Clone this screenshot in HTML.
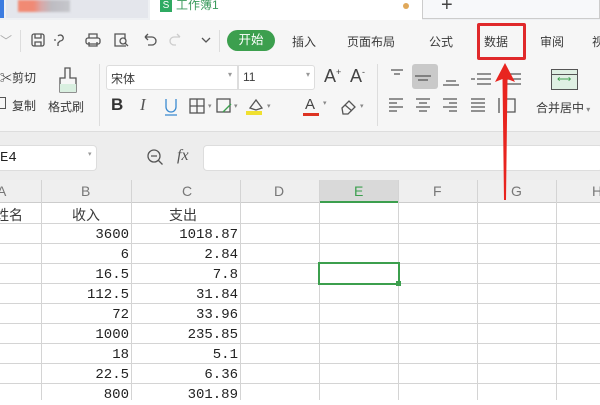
<!DOCTYPE html>
<html><head><meta charset="utf-8"><style>
*{margin:0;padding:0;box-sizing:border-box}
body{width:600px;height:400px;overflow:hidden;background:#fff;font-family:"Liberation Sans","Noto Sans CJK SC",sans-serif;position:relative;color:#3a3a3a}
.a{position:absolute}
.t{font-size:12px;white-space:nowrap}
.m{font-family:"Liberation Mono","Noto Sans CJK SC",monospace;font-size:14px;color:#222}
.ic{position:absolute;stroke:#555;fill:none;stroke-width:1.3}
</style></head><body>
<div class="a" style="left:0;top:0;width:600px;height:20px;background:#eef0f3"></div>
<div class="a" style="left:0;top:0;width:4px;height:18px;background:#3b7be0"></div>
<div class="a" style="left:6px;top:0;width:142px;height:18px;background:#e4e6ec"></div>
<div class="a" style="left:18px;top:0;width:52px;height:12px;background:linear-gradient(90deg,#f28a72 0,#f08a75 30%,#d9a8a8 45%,#bdbcc2 65%,#c6c7cc 100%);filter:blur(1px)"></div>
<div class="a" style="left:150px;top:0;width:272px;height:20px;background:#fff"></div>
<div class="a" style="left:160px;top:0;width:12px;height:12px;background:#2faa62;color:#fff;font-size:10px;text-align:center;line-height:12px">S</div>
<div class="a t" style="left:176px;top:-4px;color:#3a9a5c">工作簿1</div>
<div class="a" style="left:403px;top:3px;width:6px;height:6px;border-radius:50%;background:#e0a85a"></div>
<div class="a" style="left:422px;top:0;width:178px;height:19px;background:#f7f8fa;border:1px solid #ccc;border-top:none"></div>
<div class="a" style="left:441px;top:-6px;font-size:20px;color:#444">+</div>
<div class="a" style="left:0;top:20px;width:600px;height:42px;background:#f6f6f6"></div>
<div class="a t" style="left:0;top:32px;color:#aaa">﹀</div>
<div class="a" style="left:20px;top:30px;width:1px;height:22px;background:#ddd"></div>
<svg class="ic" style="left:30px;top:32px" width="110" height="16">
<rect x="2" y="2" width="12" height="12" rx="2"/><path d="M5 2v4h6V2M5 14v-4h6v4"/>
<path d="M28 4a3 3 0 1 1 2 5l-2 2v3M26 8h-2"/>
<rect x="56" y="6" width="14" height="6" rx="2"/><path d="M59 6V2h8v4M59 10v4h8v-4"/>
<path d="M96 14H85V2h10v5"/><circle cx="93" cy="9" r="3"/><path d="M95 11l3 3"/>
</svg>
<svg class="ic" style="left:142px;top:32px" width="80" height="16">
<path d="M3 5h7a4 4 0 0 1 0 8H6M3 5l3-3M3 5l3 3"/>
<path d="M38 5h-6a4 4 0 0 0 0 8h2M38 5l-3-3" stroke="#ccc"/>
<path d="M60 6l4 4 4-4" />
</svg>
<div class="a" style="left:219px;top:30px;width:1px;height:22px;background:#ddd"></div>
<div class="a" style="left:227px;top:30px;width:48px;height:21px;border-radius:11px;background:#3c9f4e;color:#fff;font-size:12.5px;text-align:center;line-height:21px">开始</div>
<div class="a t" style="left:292px;top:33px">插入</div>
<div class="a t" style="left:347px;top:33px">页面布局</div>
<div class="a t" style="left:429px;top:33px">公式</div>
<div class="a t" style="left:484px;top:33px">数据</div>
<div class="a t" style="left:540px;top:33px">审阅</div>
<div class="a t" style="left:592px;top:33px">视</div>
<div class="a" style="left:477px;top:23px;width:49px;height:37px;border:3px solid #e0292b;border-radius:2px"></div>
<div class="a" style="left:0;top:62px;width:600px;height:70px;background:#f6f6f6"></div>
<div class="a t" style="left:0;top:69px">✂</div>
<div class="a t" style="left:12px;top:69px">剪切</div>
<div class="a" style="left:0;top:97px;width:6px;height:12px;border:1px solid #555;border-left:none"></div>
<div class="a t" style="left:12px;top:97px">复制</div>
<svg class="ic" style="left:55px;top:66px" width="26" height="30"><path d="M10 2h5v10h6v14H5V12h5z"/><rect x="5" y="18" width="16" height="8" fill="#d9efe0" stroke="none"/></svg>
<div class="a t" style="left:48px;top:98px">格式刷</div>
<div class="a" style="left:99px;top:64px;width:1px;height:62px;background:#ddd"></div>
<div class="a" style="left:106px;top:65px;width:132px;height:25px;background:#fff;border:1px solid #ddd;border-radius:3px 0 0 3px"></div>
<div class="a t" style="left:111px;top:70px">宋体</div>
<div class="a t" style="left:228px;top:70px;font-size:8px;color:#999">▾</div>
<div class="a" style="left:238px;top:65px;width:77px;height:25px;background:#fff;border:1px solid #ddd;border-radius:0 3px 3px 0"></div>
<div class="a t" style="left:243px;top:70px">11</div>
<div class="a t" style="left:306px;top:70px;font-size:8px;color:#999">▾</div>
<div class="a" style="left:324px;top:66px;font-size:18px;color:#444">A<sup style="font-size:9px">+</sup></div>
<div class="a" style="left:350px;top:66px;font-size:18px;color:#444">A<sup style="font-size:9px">-</sup></div>
<div class="a" style="left:111px;top:95px;font-size:17px;font-weight:bold;color:#333">B</div>
<div class="a" style="left:140px;top:95px;font-size:17px;font-style:italic;color:#555;font-family:'Liberation Serif',serif">I</div>
<svg class="ic" style="left:160px;top:96px" width="160" height="22">
<path d="M6 3v8a5 5 0 0 0 10 0V3M5 19h12" stroke="#3a8ad0"/>
<rect x="30" y="3" width="14" height="14"/><path d="M30 10h14M37 3v14"/>
<text x="48" y="12" font-size="7" fill="#888" stroke="none">▾</text>
<rect x="57" y="3" width="13" height="13"/><path d="M63 16l8-8" stroke="#3c9f4e"/>
<text x="74" y="12" font-size="7" fill="#888" stroke="none">▾</text>
<path d="M90 12l6-8 6 8-6 2z"/><rect x="86" y="15" width="16" height="4" fill="#f0e030" stroke="none"/>
<text x="107" y="12" font-size="7" fill="#888" stroke="none">▾</text>
</svg>
<div class="a" style="left:303px;top:113px;width:16px;height:3px;background:#d32"></div>
<div class="a" style="left:305px;top:96px;font-size:15px;color:#444">A</div>
<div class="a t" style="left:323px;top:99px;font-size:7px;color:#888">▾</div>
<svg class="ic" style="left:338px;top:96px" width="30" height="20"><path d="M4 12l7-7 6 6-7 7H5z M7 9l7 6"/><text x="22" y="12" font-size="7" fill="#888" stroke="none">▾</text></svg>
<div class="a" style="left:377px;top:64px;width:1px;height:62px;background:#ddd"></div>
<div class="a" style="left:412px;top:64px;width:26px;height:25px;background:#c9c9c9;border-radius:3px"></div>
<svg class="ic" style="left:385px;top:66px" width="150" height="54" stroke-width="1.1">
<path d="M6 4h12M9 8h6"/>
<path d="M30 10h16M33 14h10"/>
<path d="M61 15h10M58 19h16"/>
<path d="M92 8h14M92 13h14M92 18h14M86 13h4" />
<path d="M122 8h14M122 13h14M122 18h14"/>
<path d="M4 33h14M4 37h8M4 41h14M4 45h8"/>
<path d="M31 33h14M34 37h8M31 41h14M34 45h8"/>
<path d="M58 33h14M64 37h8M58 41h14M64 45h8"/>
<path d="M86 33h14M86 37h14M86 41h14M86 45h14"/>
<path d="M114 32v15M118 33h12v13h-12"/>
</svg>
<div class="a" style="left:551px;top:69px;width:27px;height:21px;background:#dff0e3;border:1px solid #555"></div>
<div class="a" style="left:551px;top:74px;width:27px;height:1px;background:#555"></div>
<div class="a t" style="left:557px;top:74px;font-size:10px;color:#3c9f4e">⟷</div>
<div class="a t" style="left:536px;top:99px">合并居中<span style="font-size:8px;color:#888"> ▾</span></div>
<div class="a" style="left:0;top:132px;width:600px;height:48px;background:#ededed"></div>
<div class="a" style="left:0;top:131px;width:600px;height:1px;background:#ddd"></div>
<div class="a" style="left:0;top:145px;width:97px;height:26px;background:#fff;border:1px solid #ddd;border-left:none;border-radius:0 4px 4px 0"></div>
<div class="a m" style="left:0;top:150px">E4</div>
<div class="a t" style="left:88px;top:150px;font-size:7px;color:#999">▾</div>
<svg class="ic" style="left:146px;top:148px" width="20" height="20"><circle cx="8" cy="8" r="6"/><path d="M5 8h6M12.5 12.5l4 4"/></svg>
<div class="a" style="left:177px;top:147px;font-size:16px;font-style:italic;color:#555;font-family:'Liberation Serif',serif">fx</div>
<div class="a" style="left:203px;top:145px;width:400px;height:26px;background:#fff;border:1px solid #ddd;border-radius:4px"></div>
<div class="a" style="left:0;top:180px;width:600px;height:23px;background:#efefef;border-bottom:1px solid #ccc"></div>
<div class="a" style="left:319px;top:180px;width:79px;height:23px;background:#d9d9d9;border-bottom:2px solid #3c9f4e"></div>
<div class="a" style="left:0;top:180px;width:600px;height:23px;font-size:14px;color:#777">
<span class="a" style="left:-3px;top:3px">A</span><span class="a" style="left:81px;top:3px">B</span><span class="a" style="left:182px;top:3px">C</span><span class="a" style="left:274px;top:3px">D</span><span class="a" style="left:354px;top:3px;color:#3c9f4e">E</span><span class="a" style="left:433px;top:3px">F</span><span class="a" style="left:511px;top:3px">G</span><span class="a" style="left:592px;top:3px">H</span></div>
<svg class="a" style="left:0;top:180px" width="600" height="220">
<g stroke="#d4d4d4" stroke-width="1">
<path d="M41.5 0V220M131.5 0V220M240.5 0V220M319.5 0V220M398.5 0V220M477.5 0V220M556.5 0V220"/>
<path d="M0 43.5H600M0 63.5H600M0 83.5H600M0 103.5H600M0 123.5H600M0 143.5H600M0 163.5H600M0 183.5H600M0 203.5H600"/>
</g></svg>
<div class="a t" style="left:-5px;top:205px;font-size:14px">姓名</div>
<div class="a t" style="left:72px;top:205px;font-size:14px">收入</div>
<div class="a t" style="left:169px;top:205px;font-size:14px">支出</div>
<div class="a m" style="left:41px;top:225px;width:88px;text-align:right;line-height:20px">3600<br>6<br>16.5<br>112.5<br>72<br>1000<br>18<br>22.5<br>800</div>
<div class="a m" style="left:131px;top:225px;width:107px;text-align:right;line-height:20px">1018.87<br>2.84<br>7.8<br>31.84<br>33.96<br>235.85<br>5.1<br>6.36<br>301.89</div>
<div class="a" style="left:318px;top:262px;width:82px;height:23px;border:2px solid #3c9f4e"></div>
<div class="a" style="left:396px;top:281px;width:5px;height:5px;background:#3c9f4e"></div>
<svg class="a" style="left:0;top:0" width="600" height="400"><path d="M505 63L515 82L507.5 79L506 200L504 200L502.5 79L495 82Z" fill="#e8241f"/></svg>
</body></html>
